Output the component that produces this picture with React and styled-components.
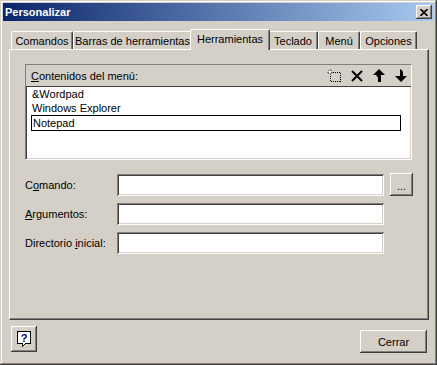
import React from 'react'
import styled, { createGlobalStyle } from 'styled-components'

const GlobalStyle = createGlobalStyle`
  html, body {
    margin: 0;
    padding: 0;
    background: #d4d0c8;
  }
  body {
    font-family: "Liberation Sans", Arial, sans-serif;
    font-size: 11px;
    color: #000;
  }
`

const raised = `
  box-shadow: inset -1px -1px #404040, inset 1px 1px #fff,
    inset -2px -2px #808080, inset 2px 2px #d4d0c8;
`

const sunken = `
  box-shadow: inset 1px 1px #808080, inset -1px -1px #fff,
    inset 2px 2px #404040, inset -2px -2px #d4d0c8;
`

const Window = styled.div`
  width: 437px;
  height: 365px;
  box-sizing: border-box;
  padding: 3px;
  background: #d4d0c8;
  display: flex;
  flex-direction: column;
  box-shadow: inset -1px -1px #404040, inset 1px 1px #d4d0c8,
    inset -2px -2px #808080, inset 2px 2px #fff;
`

const TitleBar = styled.div`
  height: 18px;
  padding: 0 2px;
  display: flex;
  align-items: center;
  justify-content: space-between;
  background: linear-gradient(to right, #0a246a, #a6caf0);
`

const Title = styled.span`
  color: #fff;
  font-weight: bold;
  font-size: 11px;
`

const CloseButton = styled.div`
  width: 16px;
  height: 14px;
  background: #d4d0c8;
  display: flex;
  align-items: center;
  justify-content: center;
  ${raised}
`

const Body = styled.div`
  padding: 8px 0 0 6px;
`

const TabStrip = styled.div`
  display: flex;
  align-items: flex-end;
  height: 20px;
  padding-left: 2px;
  position: relative;
  z-index: 1;
`

const Tab = styled.div`
  box-sizing: border-box;
  width: ${p => (p.$active ? p.$w + 4 : p.$w)}px;
  height: ${p => (p.$active ? 21 : 18)}px;
  margin: 0 ${p => (p.$active ? -2 : 0)}px ${p => (p.$active ? -1 : 0)}px;
  position: relative;
  z-index: ${p => (p.$active ? 2 : 1)};
  background: #d4d0c8;
  border-top: 1px solid #fff;
  border-left: 1px solid #fff;
  border-right: 1px solid #404040;
  border-radius: 2px 2px 0 0;
  box-shadow: inset -1px 0 #808080;
  display: flex;
  align-items: flex-start;
  justify-content: center;
  padding-top: 3px;
  white-space: nowrap;
`

const Panel = styled.div`
  box-sizing: border-box;
  width: 420px;
  height: 271px;
  padding: 14px 0 0 15px;
  border-top: 1px solid #fff;
  border-left: 1px solid #fff;
  border-right: 1px solid #404040;
  border-bottom: 1px solid #404040;
  box-shadow: inset -1px -1px #808080;
`

const Frame = styled.div`
  box-sizing: border-box;
  width: 387px;
  height: 96px;
  border-top: 1px solid #808080;
  border-left: 1px solid #808080;
  border-right: 1px solid #fff;
  border-bottom: 1px solid #fff;
  display: flex;
  flex-direction: column;
`

const FrameHeader = styled.div`
  height: 21px;
  padding: 0 4px 0 5px;
  display: flex;
  align-items: center;
  justify-content: space-between;
`

const Tools = styled.div`
  display: flex;
  align-items: center;
  gap: 10px;
`

const List = styled.div`
  flex: 1;
  background: #fff;
  padding: 1px 10px 0 6px;
  box-shadow: inset 1px 1px #404040, inset -1px -1px #d4d0c8;
`

const Item = styled.div`
  height: 14px;
  line-height: 14px;
  white-space: nowrap;
`

const EditItem = styled.div`
  height: 16px;
  line-height: 14px;
  margin-left: -1px;
  padding-left: 1px;
  box-sizing: border-box;
  border: 1px solid #000;
`

const Form = styled.div`
  margin-top: 13px;
  display: grid;
  grid-template-columns: 86px 267px 23px;
  column-gap: 6px;
  row-gap: 7px;
  align-items: center;
`

const Label = styled.div`
  white-space: nowrap;
`

const Field = styled.div`
  height: 22px;
  background: #fff;
  ${sunken}
`

const BrowseButton = styled.div`
  width: 23px;
  height: 23px;
  box-sizing: border-box;
  background: #d4d0c8;
  display: flex;
  align-items: flex-end;
  justify-content: center;
  padding-bottom: 4px;
  line-height: 11px;
  font-size: 11px;
  ${raised}
`

const Footer = styled.div`
  flex: 1;
  display: flex;
  justify-content: space-between;
  align-items: flex-start;
  padding: 6px 7px 0 8px;
`

const HelpButton = styled.div`
  width: 26px;
  height: 26px;
  background: #d4d0c8;
  display: flex;
  align-items: center;
  justify-content: center;
  ${raised}
`

const Button = styled.div`
  width: 67px;
  height: 23px;
  margin-top: 4px;
  background: #d4d0c8;
  display: flex;
  align-items: center;
  justify-content: center;
  ${raised}
`

const tabs = [
  { label: 'Comandos', w: 62 },
  { label: 'Barras de herramientas', w: 119 },
  { label: 'Herramientas', w: 76, active: true },
  { label: 'Teclado', w: 50 },
  { label: 'Menú', w: 42 },
  { label: 'Opciones', w: 57 },
]

function NewIcon() {
  return (
    <svg width="14" height="13" viewBox="0 0 14 13">
      <rect x="3.5" y="3.5" width="10" height="9" fill="none" stroke="#000" strokeDasharray="1 1" shapeRendering="crispEdges" />
      <path d="M3 0v6M0 3h6M1 1l4 4M5 1l-4 4" stroke="#808080" shapeRendering="crispEdges" />
      <rect x="2" y="2" width="2" height="2" fill="#fff" />
    </svg>
  )
}

function DeleteIcon() {
  return (
    <svg width="12" height="12" viewBox="0 0 12 12">
      <path d="M1 1L11 11M11 1L1 11" stroke="#000" strokeWidth="2" />
    </svg>
  )
}

function UpIcon() {
  return (
    <svg width="12" height="13" viewBox="0 0 12 13">
      <path d="M6 0L12 6H8V13H5V9C5 8 4 7 3 7L4 6H0Z" fill="#000" />
    </svg>
  )
}

function DownIcon() {
  return (
    <svg width="12" height="13" viewBox="0 0 12 13">
      <path d="M6 13L12 7H8V4C8 2 7 1 5 0V7H0Z" fill="#000" />
    </svg>
  )
}

function HelpIcon() {
  return (
    <svg width="14" height="16" viewBox="0 0 14 16">
      <path d="M0.5 0.5H13.5V12.5H8.5L5.5 15.5V12.5H0.5Z" fill="#fff" stroke="#000" shapeRendering="crispEdges" />
      <text x="7" y="10.5" textAnchor="middle" fontFamily="Liberation Sans, Arial, sans-serif" fontWeight="bold" fontSize="11" fill="#000080">?</text>
    </svg>
  )
}

export default function App() {
  return (
    <>
      <GlobalStyle />
      <Window>
        <TitleBar>
          <Title>Personalizar</Title>
          <CloseButton>
            <svg width="8" height="7" viewBox="0 0 8 7">
              <path d="M0.5 0L7.5 7M7.5 0L0.5 7" stroke="#000" strokeWidth="1.6" />
            </svg>
          </CloseButton>
        </TitleBar>
        <Body>
          <TabStrip>
            {tabs.map(t => (
              <Tab key={t.label} $w={t.w} $active={t.active}>
                {t.label}
              </Tab>
            ))}
          </TabStrip>
          <Panel>
            <Frame>
              <FrameHeader>
                <span><u>C</u>ontenidos del menú:</span>
                <Tools>
                  <NewIcon />
                  <DeleteIcon />
                  <UpIcon />
                  <DownIcon />
                </Tools>
              </FrameHeader>
              <List>
                <Item>&amp;Wordpad</Item>
                <Item>Windows Explorer</Item>
                <EditItem>Notepad</EditItem>
              </List>
            </Frame>
            <Form>
              <Label>C<u>o</u>mando:</Label>
              <Field />
              <BrowseButton>...</BrowseButton>
              <Label><u>A</u>rgumentos:</Label>
              <Field />
              <span />
              <Label>Directorio <u>i</u>nicial:</Label>
              <Field />
              <span />
            </Form>
          </Panel>
        </Body>
        <Footer>
          <HelpButton>
            <HelpIcon />
          </HelpButton>
          <Button>Cerrar</Button>
        </Footer>
      </Window>
    </>
  )
}
